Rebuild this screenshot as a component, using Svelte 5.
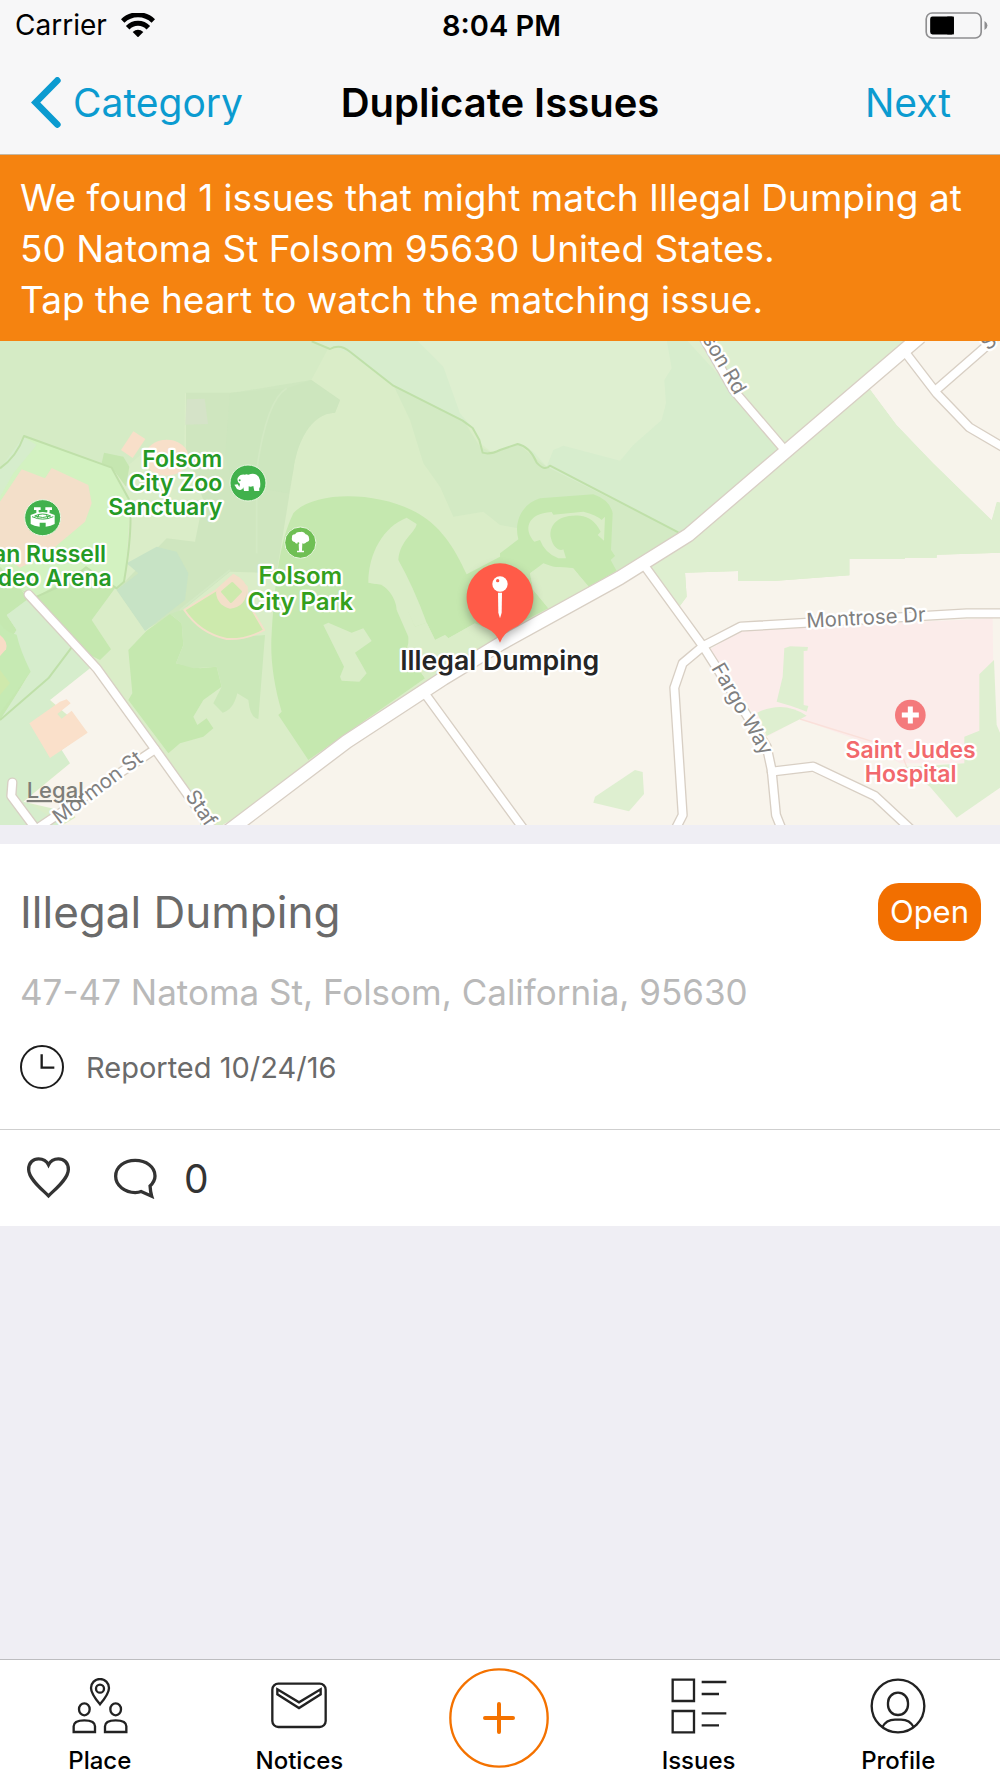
<script>
  const lines = [
    'We found 1 issues that might match Illegal Dumping at 50 Natoma St Folsom 95630 United States.',
    'Tap the heart to watch the matching issue.'
  ];
</script>

<div class="app">
  <header class="top">
    <div class="status">
      <div class="carrier">
        <span>Carrier</span>
        <svg class="wifi" viewBox="0 0 102 72" role="img" aria-label="Wi-Fi">
          <g fill="none" stroke="#000" stroke-width="15">
            <path d="M5 24a66 66 0 0 1 92 0" />
            <path d="M20 44a43 43 0 0 1 62 0" />
          </g>
          <path d="M35 57q16-14 32 0L51 73z" />
        </svg>
      </div>
      <div class="time">8:04 PM</div>
      <div class="battery">
        <svg viewBox="0 0 190 82" role="img" aria-label="Battery">
          <rect x="3" y="3" width="167" height="76" rx="18" fill="none" stroke="#8e8e90" stroke-width="5" />
          <rect x="15" y="14" width="72" height="54" rx="7" />
          <path d="M87 14v54h-20V14z" />
          <path d="M180 27q9 5 9 14t-9 14z" fill="#8e8e90" />
        </svg>
      </div>
    </div>
    <nav class="nav">
      <button class="link back">
        <svg viewBox="0 0 90 152" aria-hidden="true"><path d="M79 10 14 76l65 66" /></svg>
        <span>Category</span>
      </button>
      <h1>Duplicate Issues</h1>
      <button class="link next">Next</button>
    </nav>
  </header>

  <section class="banner">
    {#each lines as line}<p>{line}</p>{/each}
  </section>

  <svg class="map" viewBox="0 3 3000 1452" role="img" aria-label="Map of Folsom">
    <rect y="0" width="3000" height="1460" fill="#f8f4ec" />
    <!-- green base -->
    <path d="M0 0H2720L2610 148 2690 255 2800 370 2975 540 2990 486 3000 488V638L2810 644V653H2714V657H2548V706L2320 723H2214V693L2055 698 2060 770 2040 797 1940 680 1500 930 1290 1065 660 1460H0z" fill="#daedc8" />
    <path d="M0 0H3000V0L2610 148 2690 255 2800 370 2975 540 2990 486 3000 488V638L2810 644V653H2714V657H2548V706L2320 723H2214V693L2055 698 2060 770 2040 797 1930 680 2360 310 2720 0z" fill="#deefd0" />
    <path d="M2610 148 2720 0H3000V486L2990 486 2975 540 2800 370 2690 255z" fill="#f8f4ec" />
    <!-- north park shades -->
    <path d="M0 0H935L985 25 934 120 860 145 690 160H555L553 330 520 300 450 320 380 380 310 340 330 380 70 290 50 330 0 385z" fill="#d5ebc5" />
    <path d="M935 0H2720L2360 320 2040 580 1640 380 1560 310 1480 340 1440 310 1415 260 1180 135 1040 35z" fill="#d7edcd" />
    <path d="M2060 0H2720L2350 316z" fill="#deefd0" />
    <path d="M1250 0H2000L2015 85 1993 120 1998 190 1985 240 1900 315 1860 362 1690 317 1660 330 1640 380 1600 335 1560 310 1480 340 1440 310 1415 260 1380 220 1330 80z" fill="#deefd0" />
    <path d="M1180 135 1390 240 1440 320 1480 340 1555 312 1600 350 1640 380 2035 577 1930 680 1850 700 1750 600 1500 555 1450 515 1360 530 1320 440 1270 370 1230 240z" fill="#d3eac4" />
    <path d="M934 120 1020 180 1005 218C930 220 890 310 880 390L830 700 690 695 560 800 435 870 350 750 500 595 585 605 610 480 558 330V158H690L860 145z" fill="#cfe6bf" />
    <path d="M690 160 934 120 1020 180 1005 218C930 220 890 310 880 390L865 460 700 430 675 350z" fill="#cce5bd" opacity=".7" />
    <path d="M560 178 614 176 624 252 556 254z" fill="#d5e3c8" />
    <path d="M860 145Q800 180 770 390L770 640 M690 690 540 810" fill="none" stroke="#d3e9c4" stroke-width="5" />
    <path d="M470 620 530 635 565 700 555 780 435 873 350 750 415 700 380 670z" fill="#c7e3c5" />
    <!-- south-west shades -->
    <path d="M0 385 50 330 70 290 330 380 390 490 375 720 345 745 260 680 110 770 0 720z" fill="#d3f2c1" />
    <path d="M0 385 70 290 110 315 40 400 0 470z" fill="#d6edcc" />
    <path d="M0 720 110 770 260 680 345 745 275 840 333 928 300 960 220 920 80 760z" fill="#c5e8af" />
    <path d="M0 680 90 780 20 825 50 870 40 885 90 995 0 1150z" fill="#c5e8b0" />
    <path d="M80 780 215 925 270 985 150 1080 210 1270 70 1380 190 1455H0V1140L90 1000 40 885 50 870 20 825z" fill="#d6edcc" />
    <path d="M0 850Q20 880 50 884 60 930 92 995L0 1120z" fill="#c6eab3" />
    <path d="M0 990 30 1030 0 1065z" fill="#cfe9ac" />
    <path d="M0 885Q25 905 18 928L0 948z" fill="#f8dcc6" />
    <path d="M270 985 310 1010 470 1240 580 1460H240L220 1420 70 1385 210 1270 185 1230 260 1175 150 1080z" fill="#f8f4ec" />
    <path d="M600 1400V1460H180L230 1430 460 1240z" fill="#f8f4ec" />
    <path d="M467 1240 510 1240 700 1440 640 1460 560 1380z" fill="#daedc8" />
    <path d="M65 388 135 415 155 384 265 435 275 490 255 545 130 650 60 683 0 640V485z" fill="#f3dfc9" />
    <path d="M400 274 436 297 398 354 363 330z" fill="#f8dfc9" />
    <ellipse cx="500" cy="353" rx="66" ry="54" fill="#f8dfc9" />
    <path d="M88 1150 180 1085 200 1078 212 1090 172 1122 185 1136 215 1112 263 1178 150 1254z" fill="#fae0ca" />
    <path d="M312 338 370 350 388 380 378 440 335 382 305 370z" fill="#c5e6b0" />
    <!-- park blocks -->
    <path d="M440 872 510 822 545 850 550 915 528 970 600 985 650 980 665 1040 610 1080 580 1130 592 1155 620 1135 640 1165 610 1190 540 1210 505 1240 385 1080 397 1060 385 930z" fill="#c5e8af" />
    <path d="M510 822 560 805Q650 900 795 885L775 1137Q750 1135 745 1080L712 1060Q700 1110 668 1118L640 1090 665 1040 650 980 580 985 528 970 550 915 545 850z" fill="#cbe8b9" />
    <path d="M880 520C940 450 1150 450 1270 530 1340 575 1380 660 1400 703L1500 650V880L1425 850 1345 895 1335 885 1305 900 1280 848 1245 860C1190 740 1160 725 1105 728 1100 610 1180 540 1220 533L1250 552C1240 580 1200 590 1195 660 1245 740 1215 800 1225 880L1235 950 1275 1015 925 1260 835 1125 845 1115C820 1030 810 950 815 880 825 720 840 600 880 520z" fill="#c5e8af" />
    <path d="M1105 728C1160 720 1190 780 1190 810L1225 890V908L1215 950 1235 960 1275 1015 1300 1000 1430 900 1425 850 1345 895 1335 885 1305 900 1280 848 1245 860 1195 740z" fill="#daedc8" />
    <path d="M1195 660C1200 600 1245 580 1250 552L1220 533C1150 560 1105 640 1105 728L1150 735 1215 800 1245 860 1280 848Q1240 740 1195 660z" fill="#daedc8" />
    <path d="M970 855 985 848 1055 878 1090 865 1115 903 1065 938 1100 1000 1078 1025 1025 1022 1020 1010 1032 980z" fill="#daedc8" />
    <path d="M1500 640 1555 598C1540 540 1570 490 1620 475L1780 463Q1830 480 1838 520L1833 630 1845 648 1832 660 1850 693 1765 740 1720 685 1660 680 1630 670 1590 700 1600 750 1645 805 1500 880z" fill="#c5e8af" />
    <path d="M1603 605C1570 570 1580 520 1655 516L1660 524 1750 515Q1790 525 1805 540L1815 530 1812 602 1793 585 1802 575Q1780 530 1740 527C1670 522 1645 560 1653 595 1660 625 1680 635 1690 628L1698 655 1675 655Q1635 640 1620 600z" fill="#daedc8" />
    <path d="M1590 700 1632 672 1655 680 1718 684 1765 738 1645 805 1600 750z" fill="#daedc8" />
    <!-- ball field -->
    <path d="M553 810 650 750 700 705 740 740 745 790 792 870Q740 900 680 897 600 880 553 810z" fill="#cdeaad" stroke="#f3dfc9" stroke-width="6" />
    <path d="M648 755Q680 715 702 703 740 720 740 750 740 800 690 806 650 795 648 755z" fill="#f3dfc9" />
    <path d="M667 755 697 730 722 755 693 785z" fill="#cdeaad" stroke="#cdeaad" stroke-width="8" stroke-linejoin="round" />
    <!-- hospital and east side -->
    <path d="M2118 935 2220 872 2978 835 2982 1180 2900 1270 2700 1270 2600 1210 2400 1137 2310 1185z" fill="#fbecea" />
    <path d="M2400 1137 2700 1230 2720 1280" fill="none" stroke="#fae0da" stroke-width="4" />
    <path d="M2353 925 2370 919 2424 921 2422 932 2411 933V1095L2425 1098 2420 1115Q2370 1095 2330 1085L2348 1010z" fill="#deefd0" />
    <path d="M2272 1118Q2350 1080 2420 1127L2300 1188z" fill="#deefd0" />
    <path d="M2982 960 2938 1003V1172L2893 1190V1270L2740 1280 2710 1280 2790 1340 2870 1433 3000 1343V1178L2990 1155z" fill="#deefd0" />
    <path d="M1905 1290 1928 1296 1932 1362 1887 1414 1780 1388 1785 1370z" fill="#deefd0" />
    <!-- park boundaries -->
    <g fill="none" stroke="#bfe0a9" stroke-width="6" stroke-linejoin="round">
      <path d="M0 385Q50 350 72 288L335 383 388 480Q400 560 372 725L350 745 258 682 200 730 110 770" />
      <path d="M935 4 990 27Q1020 10 1050 35L1180 137 1388 242 1418 264 1438 300 1448 338Q1470 345 1500 330L1553 312Q1590 320 1610 368 1635 395 1650 377L2035 577" />
      <path d="M215 922 145 1015 0 1140" />
    </g>
    <!-- roads -->
    {#each [['#d8cfc4', 8], ['#ffffff', 0]] as [color, edge]}
      <g fill="none" stroke={color} stroke-linejoin="round">
        <g stroke-width={23 + edge} stroke-linecap="round">
          <path d="M86 764 290 985 460 1220 660 1500" />
          <path d="M37 1328 34 1368 110 1470" />
          <path d="M465 1228 120 1460" />
          <path d="M1280 1068 1580 1480" />
          <path d="M2080 -60 2200 150 2344 318" />
          <path d="M2718 40 2810 160 2908 262 3010 322" />
          <path d="M2808 150 2980 0" />
          <path d="M1940 686 2110 920 2300 1220 2315 1290 2328 1425 2350 1480" />
          <path d="M2110 918 2222 860 2900 820H3010" />
          <path d="M2110 918 2048 970 2023 1043 2048 1425 2020 1480" />
          <path d="M2315 1295 2440 1280 2625 1368 2740 1475" />
        </g>
        <path d="M650 1500 1040 1205 1330 1015 1500 912 1860 713 2065 585 2345 345 2760 -10" stroke-width={38 + edge} />
      </g>
    {/each}
    <!-- road names -->
    <g class="road">
      <text transform="translate(178 1454) rotate(-37)">Mormon St</text>
      <text transform="translate(554 1368) rotate(56)">Staf</text>
      <text transform="translate(2106 -4) rotate(60)">son Rd</text>
      <text transform="translate(2420 863) rotate(-3)">Montrose Dr</text>
      <text transform="translate(2133 984) rotate(60)">Fargo Way</text>
      <text transform="translate(2965 34) rotate(-42)">S</text>
    </g>
    <text class="legal" x="80" y="1374">Legal</text>
    <!-- places -->
    <g class="place zoo">
      <text x="667" y="380">Folsom</text>
      <text x="667" y="453">City Zoo</text>
      <text x="667" y="526">Sanctuary</text>
    </g>
    <g class="place arena">
      <text x="318" y="666">Dan Russell</text>
      <text x="335" y="738">Rodeo Arena</text>
    </g>
    <g class="place park">
      <text x="901" y="732">Folsom</text>
      <text x="901" y="809">City Park</text>
    </g>
    <g class="place hospital">
      <text x="2732" y="1253">Saint Judes</text>
      <text x="2732" y="1325">Hospital</text>
    </g>
    <g stroke="#eaf6e0" stroke-width="3">
      <circle cx="744" cy="429" r="54" fill="#41b14c" />
      <circle cx="128" cy="533" r="54" fill="#41b14c" />
      <circle cx="901" cy="608" r="47" fill="#6fbf54" />
    </g>
    <circle cx="2731" cy="1125" r="46" fill="#f47a7c" />
    <path d="M2731 1107v36M2713 1125h36" stroke="#fff" stroke-width="15" stroke-linecap="square" />
    <g fill="#fff">
      <path d="M713 414Q720 402 735 404 738 401 745 404 765 396 776 410 781 418 781 432L780 446 777 440 778 453H763L760 438Q752 442 746 439L746 453H732L730 442Q728 452 718 450 708 447 706 439L703 434 713 433 718 441 720 432Q710 426 713 414z" />
      <path d="M876 592Q875 583 885 583 890 574 901 576 912 573 917 583 927 586 927 594 930 605 920 606 913 613 907 610L906 632H912V637H891V632H897L896 610Q888 613 884 606 873 604 876 592z" />
      <path d="M92 525Q128 507 164 525V552Q153 559 137 560V548H119V560Q102 559 92 552zM102 502h20v8h-6v8h-7v-8h-7zM136 502h20v8h-7v8h-7v-8h-6z" />
    </g>
    <path d="M96 530Q128 545 160 530M104 528Q128 516 152 528 128 537 104 528M117 522l-4 12M139 522l4 12" fill="none" stroke="#41b14c" stroke-width="3" />
    <circle cx="719" cy="421" r="3" fill="#41b14c" />
    <circle cx="895" cy="610" r="3" fill="#6fbf54" />
    <!-- selected pin -->
    <g>
      <path class="shadow" d="M1500 670a102 102 0 0 1 40 195Q1512 878 1500 908 1488 878 1460 865A102 102 0 0 1 1500 670z" fill="#ff5b48" />
      <circle cx="1500" cy="732" r="23" fill="#fff" />
      <path d="M1494 758h12l-1 60-5 17-5-17z" fill="#fff" />
      <circle cx="1493" cy="722" r="5" fill="#ff5b48" />
      <text class="pin-name" x="1499" y="991">Illegal Dumping</text>
    </g>
  </svg>

  <main>
    <article class="card">
      <div class="details">
        <div class="heading">
          <h2>Illegal Dumping</h2>
          <span class="badge">Open</span>
        </div>
        <p class="address">47-47 Natoma St, Folsom, California, 95630</p>
        <div class="reported">
          <svg viewBox="0 0 132 132" aria-hidden="true">
            <circle cx="66" cy="66" r="63" fill="none" stroke="#1c1c1c" stroke-width="6" />
            <path d="M65 28v40h38" fill="none" stroke="#1c1c1c" stroke-width="7" />
          </svg>
          <span>Reported 10/24/16</span>
        </div>
      </div>
      <div class="actions">
        <button aria-label="Watch issue">
          <svg class="heart" viewBox="0 0 130 126" aria-hidden="true">
            <path d="M65 117C50 101 5 67 5 37 5 16 19 5 35 5 51 5 60 13 65 23 70 13 79 5 95 5 111 5 125 16 125 37 125 67 80 101 65 117z" />
          </svg>
        </button>
        <button class="comments" aria-label="Comments">
          <svg class="bubble" viewBox="0 0 130 126" aria-hidden="true">
            <path d="M109 87Q124 73 124 57C124 29 97 10 64 10S5 29 5 58 34 107 64 107Q75 107 82 104L114 118Q110 105 109 87z" />
          </svg>
          <span>0</span>
        </button>
      </div>
    </article>
  </main>

  <nav class="tabs" aria-label="Main">
    <a href="#place">
      <svg viewBox="0 0 168 168" aria-hidden="true">
        <path d="M84 79Q57 47 57 30a27 27 0 0 1 54 0Q111 47 84 79z" />
        <circle cx="84" cy="32" r="12" />
        <ellipse cx="37" cy="94" rx="16" ry="18" /><ellipse cx="131" cy="94" rx="16" ry="18" />
        <path d="M5 162v-17q0-18 32-18t32 18v17zM99 162v-17q0-18 32-18t32 18v17z" />
      </svg>
      <span>Place</span>
    </a>
    <a href="#notices">
      <svg viewBox="0 0 168 168" aria-hidden="true">
        <rect x="4" y="17" width="160" height="130" rx="18" />
        <path d="M19 34 84 73 149 34V49L84 90 19 49z" />
      </svg>
      <span>Notices</span>
    </a>
    <button class="add" aria-label="Add issue">
      <svg viewBox="0 0 300 300" aria-hidden="true">
        <circle cx="150" cy="150" r="146" /><path d="M108 150h84M150 108v84" stroke-width="12" stroke-linecap="round" />
      </svg>
    </button>
    <a href="#issues">
      <svg viewBox="0 0 168 168" aria-hidden="true">
        <path d="M5 5h64v64H5zM5 99h64v64H5zM92 12h74M92 48h52M92 106h74M92 142h52" />
      </svg>
      <span>Issues</span>
    </a>
    <a href="#profile">
      <svg viewBox="0 0 168 168" aria-hidden="true">
        <circle cx="84" cy="84" r="79" />
        <rect x="54" y="44" width="60" height="67" rx="30" />
        <path d="M37 148Q48 125 75 125H93Q120 125 131 148" />
      </svg>
      <span>Profile</span>
    </a>
  </nav>
</div>

<style>
  :global(body) { margin: 0; }
  .app {
    min-height: 100vh;
    display: flex;
    flex-direction: column;
    background: #efeef4;
    font-family: Inter, "Liberation Sans", sans-serif;
    color: #000;
  }
  h1, h2, p { margin: 0; font-weight: 400; }
  button { border: 0; padding: 0; background: none; font: inherit; color: inherit; cursor: pointer; }
  a { color: inherit; text-decoration: none; }
  svg { display: block; flex: none; }

  .top { background: #f7f7f8; border-bottom: 1px solid #c4b8a4; }
  .status, .nav { display: grid; grid-template-columns: 1fr auto 1fr; align-items: center; }
  .status { height: 50px; padding: 0 12px 0 15px; font-size: 28px; }
  .carrier { display: flex; align-items: center; gap: 14px; }
  .wifi { width: 34px; height: 24px; }
  .time { font-size: 29px; font-weight: 600; }
  .battery { justify-self: end; }
  .battery svg { width: 63px; height: 27px; }
  .nav { height: 104px; padding: 0 31px; font-size: 39px; }
  .link { color: #0b9bd0; }
  .back { display: flex; align-items: center; gap: 12px; justify-self: start; }
  .back svg { width: 30px; height: 51px; fill: none; stroke: #0b9bd0; stroke-width: 20; stroke-linecap: round; stroke-linejoin: miter; }
  .next { justify-self: end; margin-right: 18px; }
  h1 { font-size: 40px; font-weight: 600; }

  .banner { background: #f58310; color: #fff; padding: 17px 20px 16px; font-size: 37px; line-height: 51px; }

  .map { width: 100%; height: auto; overflow: hidden; }
  .map text { paint-order: stroke; stroke-linejoin: round; }
  .road { font-size: 61px; fill: #808080; stroke: #fff; stroke-width: 14px; }
  .legal { font-size: 66px; font-weight: 500; fill: #7d7d78; text-decoration: underline; }
  .place { font-size: 69px; font-weight: 600; stroke: #fff; stroke-width: 14px; }
  .zoo, .arena { fill: #259a25; text-anchor: end; }
  .park, .hospital { text-anchor: middle; }
  .park { font-size: 72px; fill: #35a01c; }
  .hospital { fill: #f2696d; }
  .pin-name { font-size: 80px; font-weight: 600; fill: #262626; stroke: #fff; stroke-width: 14px; text-anchor: middle; }
  .shadow { filter: drop-shadow(0 12px 14px rgb(0 0 0 / 0.3)); }

  .card { margin-top: 19px; background: #fff; }
  .details { display: flex; flex-direction: column; padding: 39px 19px 40px 20px; border-bottom: 1px solid #cfcfcf; }
  .heading { display: flex; justify-content: space-between; align-items: center; }
  h2 { font-size: 44px; line-height: 58px; color: #6a6a6a; }
  .badge { padding: 0 12px; border-radius: 21px; background: #f26f00; color: #fff; font-size: 31px; line-height: 58px; }
  .address { margin-top: 28px; font-size: 35px; line-height: 46px; color: #b9b9b9; }
  .reported { display: flex; align-items: center; gap: 22px; margin-top: 30px; font-size: 29px; color: #6a6a6a; }
  .reported svg { width: 44px; height: 44px; }
  .actions { display: flex; align-items: center; gap: 44px; height: 96px; padding: 0 27px; color: #333; }
  .actions svg { fill: none; stroke: #333; stroke-width: 10; width: 43px; height: 42px; }
  .comments { display: flex; align-items: center; gap: 27px; font-size: 39px; }

  .tabs { display: grid; grid-template-columns: repeat(5, 1fr); height: 118px; margin-top: auto; padding-right: 2px; background: #fff; border-top: 1px solid #bdbdc0; }
  .tabs a { display: flex; flex-direction: column; align-items: center; padding-top: 18px; gap: 12px; font-size: 24px; line-height: 30px; font-weight: 500; }
  .tabs svg { width: 56px; height: 56px; fill: none; stroke: #222; stroke-width: 7; }
  .add { display: flex; justify-content: center; padding-top: 8px; }
  .tabs .add svg { width: 100px; height: 100px; stroke: #f47200; }
</style>
